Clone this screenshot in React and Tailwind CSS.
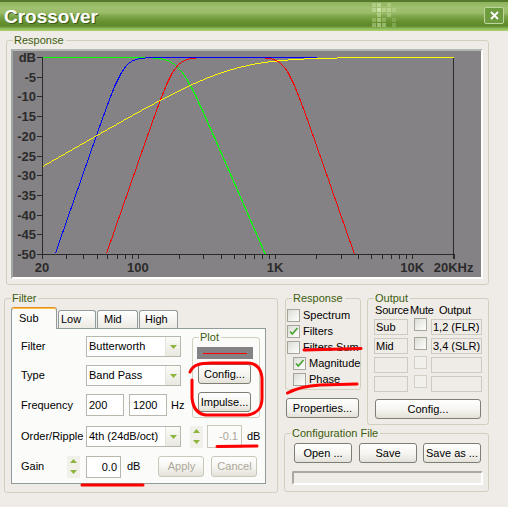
import React from 'react';

// chart scale, in page pixels
const X0 = 42;
const DEC = 137.2;
const Y0 = 57;
const PDB = 3.94;

const hp = (f, fc, n) => -10 * Math.log10(1 + Math.pow(fc / f, 2 * n));
const lp = (f, fc, n) => -10 * Math.log10(1 + Math.pow(f / fc, 2 * n));

function curvePoints(fn, fmax = 20000) {
  const pts = [];
  for (let x = X0; x <= 453; x++) {
    const f = 20 * Math.pow(10, (x - X0) / DEC);
    if (f > fmax) break;
    const db = fn(f);
    if (db < -50.2) continue;
    pts.push(`${x + 0.5},${Math.round(Y0 - db * PDB) + 0.5}`);
  }
  return pts.join(' ');
}

const freqTicks = [];
[10, 100, 1000].forEach((m) => {
  for (let k = m === 10 ? 2 : 1; k <= 9; k++) freqTicks.push(k * m);
});
freqTicks.push(10000, 20000);

const dbLabels = ['dB', '-5', '-10', '-15', '-20', '-25', '-30', '-35', '-40', '-45', '-50'];
const freqLabels = [
  { f: 20, t: '20' },
  { f: 100, t: '100' },
  { f: 1000, t: '1K' },
  { f: 10000, t: '10K' },
  { f: 20000, t: '20KHz' },
];

const fx = (f) => X0 + Math.log10(f / 20) * DEC;

function Chart() {
  const curves = [
    { c: '#00ff00', p: curvePoints((f) => lp(f, 200, 4)) },
    { c: '#ff0000', p: curvePoints((f) => hp(f, 184, 5) + lp(f, 1189, 5)) },
    { c: '#0000ff', p: curvePoints((f) => hp(f, 78, 5), 2000) },
    { c: '#ffff00', p: curvePoints((f) => hp(f, 485, 1)) },
  ];
  return (
    <svg width="468" height="226" viewBox="13 51 468 226" className="block">
      <rect x="13" y="51" width="468" height="226" fill="#858285" />
      <g stroke="#2a2a2a" strokeWidth="1" shapeRendering="crispEdges">
        <line x1="42.5" y1="57" x2="42.5" y2="255" />
        <line x1="42" y1="254.5" x2="454" y2="254.5" />
        <line x1="453.5" y1="57" x2="453.5" y2="259" />
        {dbLabels.map((l, i) => {
          const y = Math.round(Y0 + i * 19.7) + 0.5;
          return <line key={l} x1="37" y1={y} x2="42" y2={y} />;
        })}
        {freqTicks.map((f) => {
          const x = Math.round(fx(f)) + 0.5;
          return <line key={f} x1={x} y1="254" x2={x} y2="259" />;
        })}
      </g>
      {curves.map((c) => (
        <polyline key={c.c} points={c.p} fill="none" stroke={c.c} strokeWidth="1" shapeRendering="crispEdges" />
      ))}
      <g fill="#2b2b2b" fontFamily="'Liberation Sans', Arial, sans-serif" fontWeight="bold" fontSize="13">
        {dbLabels.map((l, i) => (
          <text key={l} x="36" y={Y0 + i * 19.7 + 5} textAnchor="end">
            {l}
          </text>
        ))}
        {freqLabels.map((l) => (
          <text key={l.t} x={fx(l.f)} y="272" textAnchor="middle">
            {l.t}
          </text>
        ))}
      </g>
    </svg>
  );
}

function Group({ label, className, labelBg, children }) {
  return (
    <div className={`relative border border-[#d0d0bf] rounded-[3px] ${className}`}>
      <span className={`absolute -top-[8px] left-[6px] pl-[1px] pr-[2px] leading-[14px] text-[#3d5e0f] ${labelBg}`}>
        {label}
      </span>
      {children}
    </div>
  );
}

function Btn({ children, className, disabled }) {
  return (
    <div
      className={`flex items-center justify-center rounded-[3px] border bg-[linear-gradient(to_bottom,#ffffff_0%,#f5f4f0_55%,#e3e1d8_100%)] ${
        disabled ? 'border-[#cac8bb] text-[#aca899]' : 'border-[#7d7f75] text-black'
      } ${className}`}
    >
      {children}
    </div>
  );
}

function Tri({ down }) {
  return (
    <svg width="7" height="4" viewBox="0 0 7 4">
      <path d={down ? 'M0 0H7L3.5 4Z' : 'M0 4H7L3.5 0Z'} fill="#8db53c" />
    </svg>
  );
}

function Select({ value }) {
  return (
    <div className="flex w-[95px] h-[21px] border border-[#b7b7ae] bg-white">
      <span className="flex-1 pl-[2px] leading-[19px]">{value}</span>
      <span className="w-[15px] h-full flex items-center justify-center border-l border-[#e4e2d9] bg-[linear-gradient(to_bottom,#fbfbf8,#e9e8e1)]">
        <Tri down />
      </span>
    </div>
  );
}

function Spin() {
  return (
    <div className="flex flex-col w-[13px] h-[22px]">
      <span className="flex-1 flex items-center justify-center bg-[#f1f0eb]">
        <Tri />
      </span>
      <span className="flex-1 flex items-center justify-center bg-[#f1f0eb]">
        <Tri down />
      </span>
    </div>
  );
}

function Check({ checked, disabled }) {
  return (
    <span
      className={`relative inline-flex shrink-0 w-[13px] h-[13px] border ${
        disabled ? 'border-[#d2d0c5] bg-[#f1f0eb]' : 'border-[#a5a59b] bg-[linear-gradient(135deg,#dcdcd5,#ffffff)]'
      }`}
    >
      {checked && (
        <svg width="11" height="11" viewBox="0 0 11 11" className="absolute left-0 top-0">
          <path d="M2 5.5L4.3 8L9.5 2" fill="none" stroke="#4fa53a" strokeWidth="1.8" />
        </svg>
      )}
    </span>
  );
}

function CheckRow({ label, checked, indent }) {
  return (
    <div className={`flex items-center h-[16px] ${indent ? 'pl-[6px]' : ''}`}>
      <Check checked={checked} />
      <span className="ml-[3px] leading-[13px]">{label}</span>
    </div>
  );
}

function Field({ value, className }) {
  return (
    <div className={`h-[16px] border border-[#cdcbc1] pl-[1px] leading-[14px] ${className}`}>{value}</div>
  );
}

function OutRow({ src, out, disabled }) {
  return (
    <div className="flex items-center h-[16px]">
      <Field value={src} className="w-[34px]" />
      <span className="ml-[6px]">
        <Check disabled={disabled} />
      </span>
      <Field value={out} className="ml-[4px] w-[51px]" />
    </div>
  );
}

function TitleChecker() {
  const cells = [
    [0, 0, 0.35], [1, 0, 0.5], [3, 0, 0.3],
    [0, 1, 0.45], [1, 1, 0.8], [2, 1, 0.4], [3, 1, 0.45], [4, 1, 0.25],
    [1, 2, 0.45], [3, 2, 0.35],
    [0, 3, 0.3], [1, 3, 0.5], [2, 3, 0.3], [4, 3, 0.2],
    [0, 4, 0.4], [1, 4, 0.55], [2, 4, 0.45], [4, 4, 0.25],
  ];
  return (
    <svg width="26" height="25" className="absolute left-[372px] top-[3px]">
      {cells.map(([c, r, o], i) => (
        <rect key={i} x={c * 5} y={r * 5} width="4" height="4" fill="#d6ebb4" opacity={o} />
      ))}
    </svg>
  );
}

function Marks() {
  return (
    <svg width="508" height="507" className="absolute left-0 top-0 pointer-events-none">
      <g fill="none" stroke="#ff0000" strokeWidth="3" strokeLinecap="round" strokeLinejoin="round">
        <path d="M190 372C193 365 199 363 212 363L247 363C256 363 261 368 262 378L262 398C262 408 258 413 248 415L206 415C197 414 193 408 192 398L192 380" />
        <path d="M217 446.5L257 446" />
        <path d="M82 485L143 485" />
        <path d="M304 350L361 348.5" />
        <path d="M287.5 393C295 389 305 386 320 385L357 384" />
      </g>
    </svg>
  );
}

export default function App() {
  return (
    <div className="font-['Liberation_Sans',Arial,sans-serif] text-[11px] text-black bg-white w-[510px] h-[511px]">
      <div className="relative w-[508px] h-[507px] bg-[#efebe6] flex flex-col">
        {/* title bar */}
        <div className="relative flex items-center h-[31px] shrink-0 bg-[linear-gradient(to_bottom,#55782a_0px,#55782a_2px,#8db35c_2px,#a0c170_8px,#9abc69_13px,#7ea64c_16px,#67912f_22px,#5e892c_26px,#86b14f_28px,#a6cc6c_30px,#a6cc6c_31px)]">
          <span className="pl-[4px] pt-[1px] text-[19px] font-bold text-white leading-none [text-shadow:1px_1px_0_#3b5a16]">
            Crossover
          </span>
          <TitleChecker />
          <div className="ml-auto mr-[4px] w-[20px] h-[17px] rounded-[2px] border border-[#bcd59a] bg-[#6f9b3f] flex items-center justify-center">
            <svg width="9" height="9" viewBox="0 0 9 9">
              <path d="M1 1L8 8M8 1L1 8" stroke="#ffffff" strokeWidth="1.8" />
            </svg>
          </div>
        </div>

        {/* response graph */}
        <Group label="Response" labelBg="bg-[#efebe6]" className="mt-[9px] ml-[6px] w-[483px] h-[245px] pt-[8px] pl-[4px]">
          <div className="w-[472px] h-[230px] border-2 border-t-[#b3b7b3] border-l-[#a3a9a3] border-r-white border-b-white">
            <Chart />
          </div>
        </Group>

        {/* lower part */}
        <div className="flex mt-[13px] pl-[4px]">
          <Group label="Filter" labelBg="bg-[#efebe6]" className="w-[274px] h-[195px] pt-[8px] pl-[6px]">
            <div className="flex items-end h-[21px]">
              <div className="relative z-10 w-[46px] h-[22px] -mb-[1px] pl-[7px] pt-[2px] bg-[#fbfbf9] border border-b-0 border-[#919b9c] rounded-t-[3px] border-t-[#e68b2c] shadow-[inset_0_1px_0_#ffc73c] leading-[16px]">
                Sub
              </div>
              <div className="ml-[1px] w-[38px] h-[18px] pl-[2px] border border-b-0 border-[#919b9c] rounded-t-[3px] bg-[linear-gradient(to_bottom,#ffffff,#eceae3)] leading-[17px]">
                Low
              </div>
              <div className="ml-[1px] w-[41px] h-[18px] pl-[6px] border border-b-0 border-[#919b9c] rounded-t-[3px] bg-[linear-gradient(to_bottom,#ffffff,#eceae3)] leading-[17px]">
                Mid
              </div>
              <div className="ml-[1px] w-[39px] h-[18px] pl-[5px] border border-b-0 border-[#919b9c] rounded-t-[3px] bg-[linear-gradient(to_bottom,#ffffff,#eceae3)] leading-[17px]">
                High
              </div>
            </div>
            <div className="w-[255px] h-[156px] border border-[#919b9c] bg-[#fbfbf9] pt-[7px] pl-[9px]">
              <div className="flex items-start">
                <div className="flex flex-col gap-[8px] w-[171px]">
                  <div className="flex items-center h-[21px]">
                    <span className="w-[65px]">Filter</span>
                    <Select value="Butterworth" />
                  </div>
                  <div className="flex items-center h-[21px]">
                    <span className="w-[65px]">Type</span>
                    <Select value="Band Pass" />
                  </div>
                  <div className="flex items-center h-[22px]">
                    <span className="w-[65px]">Frequency</span>
                    <div className="w-[38px] h-[22px] border border-[#b7b7ae] bg-white pl-[2px] leading-[20px]">200</div>
                    <div className="ml-[5px] w-[38px] h-[22px] border border-[#b7b7ae] bg-white pl-[3px] leading-[20px]">1200</div>
                    <span className="ml-[4px]">Hz</span>
                  </div>
                </div>
                <Group label="Plot" labelBg="bg-[#fbfbf9]" className="mt-[1px] w-[68px] h-[81px] pt-[9px] pl-[4px]">
                  <div className="w-[56px] h-[12px] bg-[#858285] flex items-center justify-center">
                    <div className="w-[44px] h-[1px] bg-[#ff0000]" />
                  </div>
                  <Btn className="mt-[5px] ml-[1px] w-[53px] h-[20px]">Config...</Btn>
                  <Btn className="mt-[8px] ml-[1px] w-[53px] h-[20px]">Impulse...</Btn>
                </Group>
              </div>
              <div className="flex items-center h-[23px] mt-[7px]">
                <span className="w-[65px]">Order/Ripple</span>
                <Select value="4th (24dB/oct)" />
                <span className="ml-[9px]">
                  <Spin />
                </span>
                <div className="ml-[4px] w-[35px] h-[23px] border border-[#cac8bb] pr-[3px] text-right text-[#aca899] leading-[21px]">
                  -0.1
                </div>
                <span className="ml-[5px]">dB</span>
              </div>
              <div className="flex items-center h-[23px] mt-[7px]">
                <span className="w-[46px]">Gain</span>
                <Spin />
                <div className="ml-[6px] w-[35px] h-[22px] border border-[#b7b7ae] bg-white pr-[3px] text-right leading-[20px]">
                  0.0
                </div>
                <span className="ml-[6px]">dB</span>
                <Btn disabled className="ml-[18px] w-[46px] h-[21px]">
                  Apply
                </Btn>
                <Btn disabled className="ml-[7px] w-[46px] h-[21px]">
                  Cancel
                </Btn>
              </div>
            </div>
          </Group>

          <div className="ml-[6px] w-[205px] flex flex-col">
            <div className="flex items-start">
              <div className="ml-[1px] w-[76px] flex flex-col">
                <Group label="Response" labelBg="bg-[#efebe6]" className="w-[76px] h-[92px] pt-[8px] pl-[1px]">
                  <CheckRow label="Spectrum" />
                  <CheckRow label="Filters" checked />
                  <CheckRow label="Filters Sum" />
                  <CheckRow label="Magnitude" checked indent />
                  <CheckRow label="Phase" indent />
                </Group>
                <Btn className="mt-[8px] ml-[1px] w-[73px] h-[20px]">Properties...</Btn>
              </div>
              <Group label="Output" labelBg="bg-[#efebe6]" className="ml-[6px] w-[122px] h-[127px] pt-[5px] pl-[6px]">
                <div className="flex h-[13px] leading-[13px] whitespace-nowrap">
                  <span className="pl-[1px] w-[36px] tracking-[-0.2px]">Source</span>
                  <span className="w-[29px] tracking-[-0.2px]">Mute</span>
                  <span className="tracking-[-0.2px]">Output</span>
                </div>
                <div className="flex flex-col gap-[3px] mt-[2px]">
                  <OutRow src="Sub" out="1,2 (FLR)" />
                  <OutRow src="Mid" out="3,4 (SLR)" />
                  <OutRow disabled />
                  <OutRow disabled />
                </div>
                <Btn className="mt-[7px] ml-[1px] w-[106px] h-[20px]">Config...</Btn>
              </Group>
            </div>
            <Group label="Configuration File" labelBg="bg-[#efebe6]" className="mt-[8px] w-[205px] h-[59px] pt-[9px]">
              <div className="flex pl-[9px]">
                <Btn className="w-[58px] h-[20px]">Open ...</Btn>
                <Btn className="ml-[7px] w-[58px] h-[20px]">Save</Btn>
                <Btn className="ml-[6px] w-[58px] h-[20px]">Save as ...</Btn>
              </div>
              <div className="mt-[8px] ml-[7px] w-[191px] h-[14px] rounded-[2px] border-2 border-t-[#a9a9a1] border-l-[#a9a9a1] border-r-[#ffffff] border-b-[#ffffff] bg-[#efebe6]" />
            </Group>
          </div>
        </div>

        <Marks />
      </div>
    </div>
  );
}
